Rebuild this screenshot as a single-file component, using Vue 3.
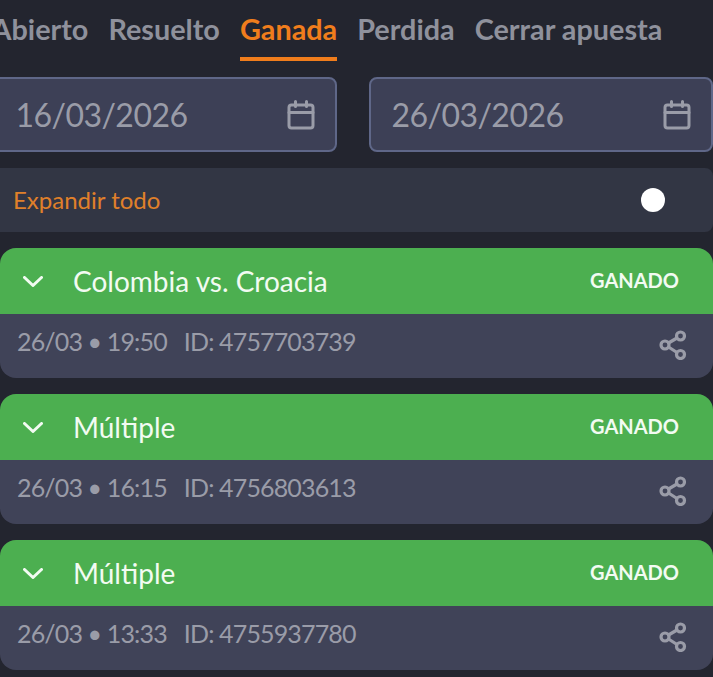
<template>
  <div class="page">
    <nav class="tabs">
      <a
        v-for="tab in tabs"
        :key="tab"
        class="tab"
        :class="{ active: tab === activeTab }"
      >{{ tab }}</a>
    </nav>

    <div class="dates">
      <div v-for="date in dates" :key="date" class="date-field">
        <span>{{ date }}</span>
        <svg class="calendar" viewBox="0 0 28 30" fill="none" stroke="currentColor" stroke-width="3" stroke-linecap="round" stroke-linejoin="round">
          <rect x="2" y="5" width="24" height="23" rx="2.5" />
          <path d="M2 12.5h24M8.5 1.5v5M19.5 1.5v5" />
        </svg>
      </div>
    </div>

    <div class="expand-row">
      <span>Expandir todo</span>
      <i class="knob"></i>
    </div>

    <section v-for="bet in bets" :key="bet.id" class="bet">
      <header class="bet-head">
        <svg class="chevron" viewBox="0 0 20 11" fill="none" stroke="currentColor" stroke-width="3" stroke-linecap="round" stroke-linejoin="round">
          <path d="M1.5 1.5 10 9.5l8.5-8" />
        </svg>
        <h3>{{ bet.title }}</h3>
        <b>GANADO</b>
      </header>
      <div class="bet-body">
        <span class="when">{{ bet.when }}</span>
        <span>ID: {{ bet.id }}</span>
        <svg class="share" viewBox="0 0 28 30" fill="none" stroke="currentColor" stroke-width="3.2">
          <circle cx="21.5" cy="6" r="4" />
          <circle cx="6" cy="15" r="4" />
          <circle cx="21.5" cy="24.5" r="4" />
          <path d="M9.5 13 18 8M9.5 17l8.5 5.5" />
        </svg>
      </div>
    </section>
  </div>
</template>

<script setup>
const tabs = ["Abierto", "Resuelto", "Ganada", "Perdida", "Cerrar apuesta"];
const activeTab = "Ganada";
const dates = ["16/03/2026", "26/03/2026"];

const bets = [
  { title: "Colombia vs. Croacia", when: "26/03 • 19:50", id: "4757703739" },
  { title: "Múltiple", when: "26/03 • 16:15", id: "4756803613" },
  { title: "Múltiple", when: "26/03 • 13:33", id: "4755937780" },
];
</script>

<style>
html,
body {
  margin: 0;
  background: #23252f;
  overflow: hidden;
}
</style>

<style scoped>
.page {
  width: 713px;
  height: 677px;
  overflow: hidden;
  background: #23252f;
  font-family: Lato, sans-serif;
}

.tabs {
  display: flex;
  gap: 20px;
  height: 61px;
  margin-left: -8.5px;
  white-space: nowrap;
}

.tab {
  height: 61px;
  box-sizing: border-box;
  padding-top: 11px;
  line-height: 36px;
  font-size: 28.8px;
  font-weight: 700;
  color: #8f919c;
}

.tab.active {
  color: #f07d1c;
  border-bottom: 4px solid #f07d1c;
}

.dates {
  display: flex;
  gap: 32px;
  margin: 16px 0 16px -7px;
}

.date-field {
  flex: 0 0 344px;
  box-sizing: border-box;
  height: 75px;
  display: flex;
  align-items: center;
  justify-content: space-between;
  padding: 0 20px 0 20.5px;
  background: #3d4056;
  border: 2px solid #5f6788;
  border-radius: 8px;
  font-size: 32px;
  letter-spacing: -0.55px;
  color: #9a9ca8;
}

.calendar {
  width: 28px;
  height: 30px;
}

.expand-row {
  height: 64px;
  display: flex;
  align-items: center;
  justify-content: space-between;
  padding: 0 48px 0 13px;
  background: #323644;
  border-radius: 0 8px 8px 0;
  font-size: 24px;
  color: #e0802a;
}

.expand-row span {
  margin-bottom: 2px;
}

.knob {
  width: 24px;
  height: 24px;
  border-radius: 50%;
  background: #fff;
}

.bet {
  margin-top: 16px;
  border-radius: 16px;
  overflow: hidden;
}

.bet-head {
  height: 66px;
  display: flex;
  align-items: center;
  padding: 0 34px 0 23px;
  background: #4caf50;
  color: #f2fbf2;
}

.chevron {
  width: 20px;
  height: 11px;
  margin-right: 30px;
}

.bet-head h3 {
  flex: 1;
  margin: 0;
  font-size: 28px;
  font-weight: 400;
}

.bet-head b {
  font-size: 20px;
  font-weight: 700;
  margin-top: -3px;
}

.bet-body {
  height: 64px;
  display: flex;
  align-items: center;
  padding: 0 26px 11px 17px;
  box-sizing: border-box;
  background: #404358;
  font-size: 25px;
  letter-spacing: -0.85px;
  color: #9a9ca8;
}

.when {
  margin-right: 17px;
}

.share {
  width: 28px;
  height: 30px;
  margin-left: auto;
  margin-top: 9px;
}
</style>
